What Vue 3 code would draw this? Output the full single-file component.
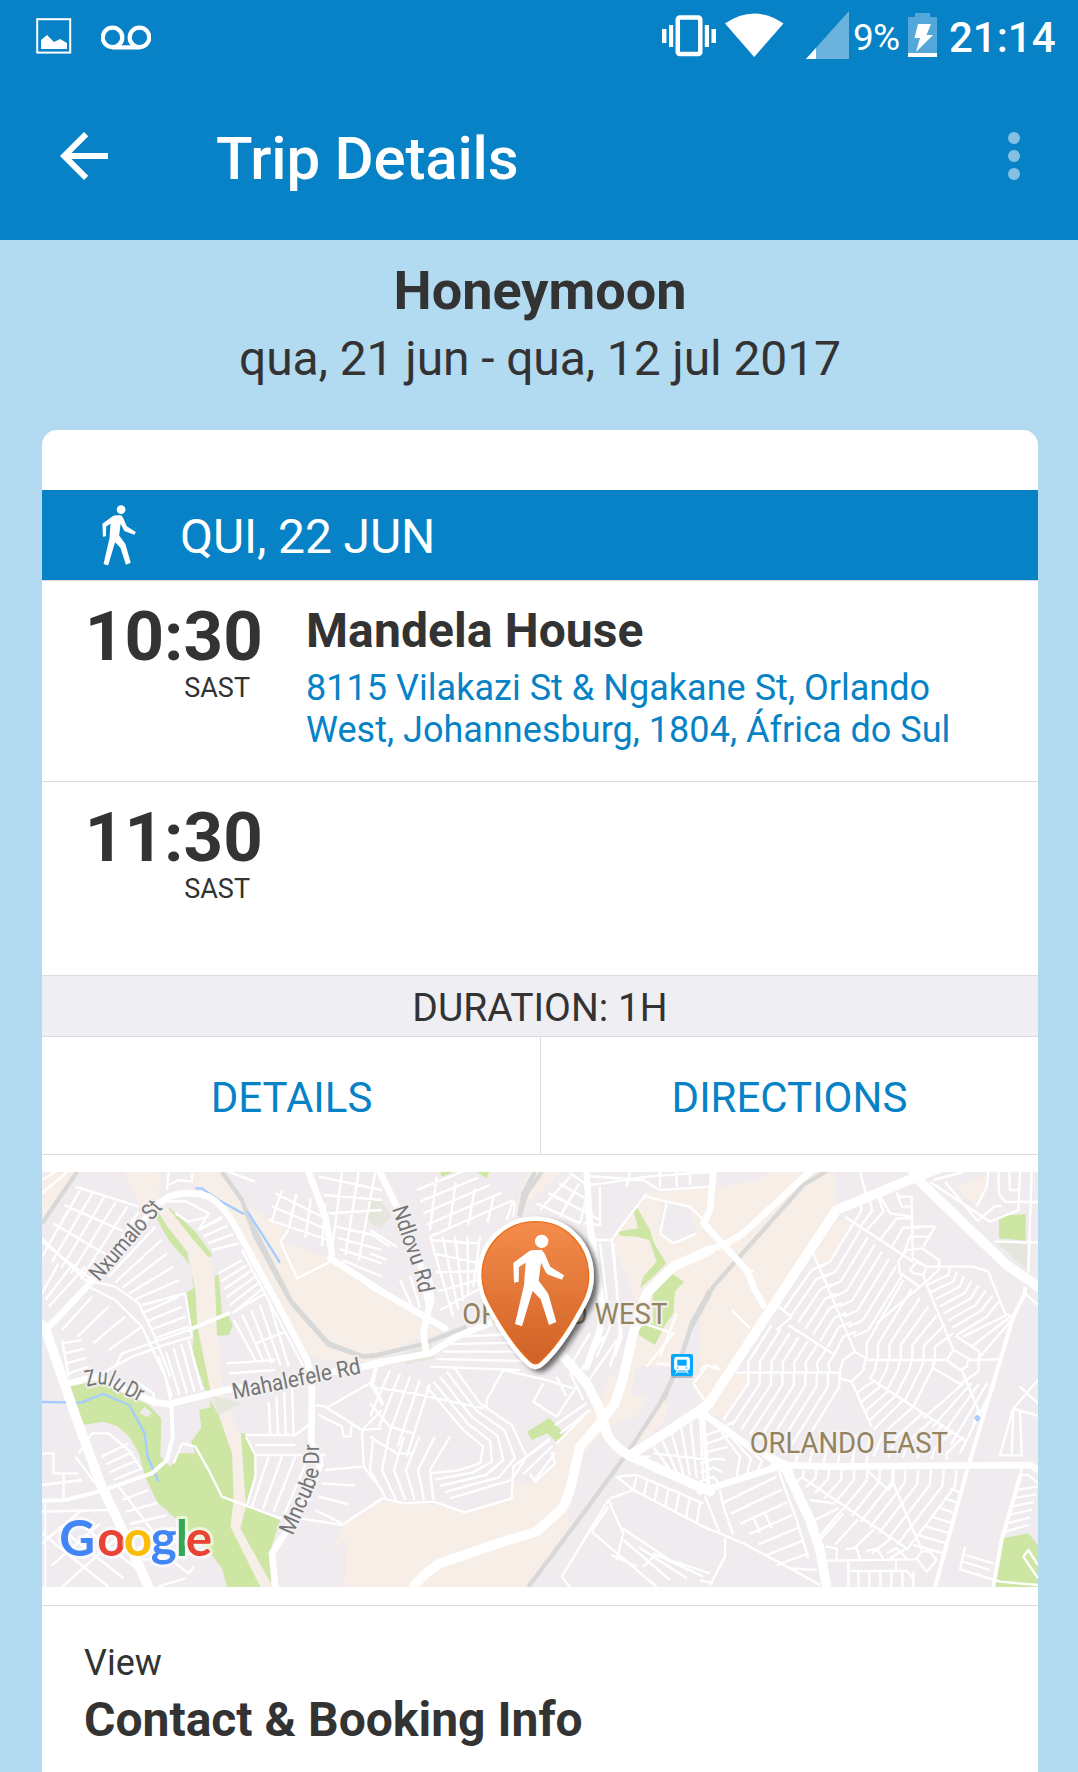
<script setup>
const stops = [
  { time: '10:30', zone: 'SAST', name: 'Mandela House', address: ['8115 Vilakazi St & Ngakane St, Orlando', 'West, Johannesburg, 1804, África do Sul'] },
  { time: '11:30', zone: 'SAST', name: '', address: [] },
]

const walker = 'M430 279L478 243Q488 239 500 240L515 240Q522 246 527 258L541 290L582 316L576 329L532 313Q527 308 524 300L513 278L506 332Q522 352 535 372L559 456L537 465L512 388L488 363L483 378L456 469L435 462L462 345L467 278L447 291L446 335L432 338Z'

// Spreads n streets evenly between two bounding polylines given as flat x,y lists.
function blend([a, b, n]) {
  let d = ''
  for (let i = 0; i < n; i++) {
    const t = n > 1 ? i / (n - 1) : 0
    for (let k = 0; k < a.length; k += 2) {
      const x = a[k] + (b[k] - a[k]) * t
      const y = a[k + 1] + (b[k + 1] - a[k + 1]) * t
      d += (k ? 'L' : 'M') + x.toFixed(1) + ' ' + y.toFixed(1)
    }
  }
  return d
}

const sheets = [
  {
    x: 0,
    tan: 'M245 6H352L350 80L385 125L450 190L508 262L520 330L528 500L545 690L595 790L612 1010L595 1075L690 1251H655L565 1070L575 990L570 850L530 735L490 600L465 440L460 360L440 250L340 120L290 100ZM455 6H540L600 95L740 185L720 215L870 270L1020 370V580L850 570L790 550L560 130L490 70L455 45ZM0 40L30 6H105L0 170ZM1020 990L905 1065L870 1140L915 1110L908 1251H1020Z',
    green: 'M335 130L345 120L380 175L435 245L460 360L466 470L505 660L490 662L450 545L455 500L430 370L455 355L445 285L380 210ZM372 105L400 130L460 185L511 255L500 262L450 205ZM518 318L530 314L540 430L558 435L573 465L560 495L525 497ZM505 690L530 735L570 850L575 990L565 1070L655 1251H555L540 1195L505 1150L400 1045L345 995L310 920L290 850L262 800L225 768L185 755L120 765L80 650L160 632L320 705L358 745L355 860L385 890L410 850H460L447 815L478 775L472 720L505 712ZM597 790H612L640 850V920L612 1010L715 1050L685 1140L687 1240L595 1075L612 1010Z',
    khaki: 'M510 678L600 700L530 735ZM980 88H1020V175L970 145Z',
    patch: 'M292 728L308 710L330 728L315 742Z',
    water: 'M0 696L118 698L183 672L262 705L308 790L317 860L350 935M460 55H480L530 90L605 132M617 125L714 278',
    rail: 'M105 6L0 160M540 6L600 90L640 200L740 385L860 520L965 560L1020 553M610 125L750 400L860 525L965 560',
    minor: 'M130 345L220 390L300 470L370 620L385 690M0 205L130 330L220 350L290 400L330 480L385 620M220 590L240 550L440 480L560 430M60 510L80 620M180 610L270 560L380 520M370 95L430 93L500 130L470 180L540 145M400 130L440 155L500 140M600 240L790 600M570 430L670 370M640 520L730 485M740 180L715 215L765 325L875 270M560 6L640 35M380 6L375 60M380 45L410 30L450 35V10M610 795H760L800 765M640 825H760M820 705L850 710L960 780L1020 775M830 735L900 770L905 800H925L930 760M960 780L965 890L1020 960M640 855H850M715 1045L740 1040L900 1065L1020 985M540 980L715 1045M420 820L460 830L500 900L540 980L620 1010M612 800L640 855V920L615 1005M110 850L150 790L200 790L260 840L300 900M0 850H35V910H110M65 910V990M0 945L120 930M100 860L160 940M0 1025L200 1020M10 1000V1251M230 950L330 1080L400 1180L440 1210L455 1190M345 1251L430 1225M395 880L420 820M430 370L450 500M290 640L335 670V710',
    streets: [
      [[0, 260, 120, 50], [145, 345, 290, 125], 6], [[100, 50, 290, 110], [0, 215, 150, 330], 4],
      [[200, 320, 340, 170], [300, 405, 430, 370], 6], [[300, 430, 410, 380], [350, 530, 450, 500], 5],
      [[150, 380, 60, 480], [300, 470, 200, 540], 4], [[350, 560, 390, 680], [440, 510, 480, 660], 5],
      [[60, 520, 120, 510], [80, 610, 140, 590], 4], [[0, 30, 40, 6], [0, 70, 75, 6], 2], [[0, 370, 50, 280], [20, 410, 130, 290], 3],
      [[470, 180, 540, 140], [510, 240, 590, 220], 4], [[530, 310, 600, 270], [570, 430, 670, 350], 6],
      [[575, 450, 640, 570], [680, 390, 740, 590], 5], [[555, 580, 700, 570], [560, 610, 700, 600], 2],
      [[700, 70, 860, 150], [680, 150, 860, 210], 3], [[720, 60, 690, 150], [850, 100, 840, 230], 4],
      [[880, 170, 1020, 200], [900, 270, 1020, 320], 4], [[830, 20, 1020, 60], [860, 130, 1020, 120], 3], [[900, 6, 870, 240], [1000, 6, 950, 270], 3],
      [[680, 695, 685, 795], [750, 650, 755, 800], 4], [[680, 860, 630, 1010], [840, 860, 760, 1040], 5],
      [[850, 900, 960, 890], [820, 1020, 900, 1060], 4], [[180, 860, 260, 820], [215, 930, 300, 895], 4],
      [[0, 1090, 200, 1251], [100, 1050, 290, 1200], 3], [[0, 1120, 120, 1020], [60, 1251, 230, 1100], 3],
      [[240, 990, 320, 960], [300, 1170, 450, 1150], 6], [[860, 710, 1000, 630], [960, 780, 1020, 720], 2],
    ],
    medium: 'M388 700L392 800L375 870L330 910L170 965L70 990L0 992M440 480L560 430M1020 700L990 640L1000 600',
    major: 'M15 475L60 430L130 355L350 100L385 78Q440 60 500 80Q545 105 580 170L700 390L795 570L810 620L808 820L835 880L800 980L735 1080L690 1150L700 1251M80 640L160 620L335 695L380 703L540 662L800 618L1020 580M800 6L850 140L870 250M865 265L1020 365',
    trunk: 'M0 465L15 490L105 750L175 940L260 1120L320 1251',
  },
  {
    x: 328,
    tan: 'M0 1015L60 990L200 1005L285 1027L420 985L430 935L490 938L555 880L560 820L635 730L690 700L720 610L765 640L780 480L800 400L725 210L745 180L800 110L830 70L1020 50V360L965 480L900 590H795L785 675L830 680L800 740L750 750L700 790L640 850L590 1060L640 1030L465 1251H0ZM0 350L200 480L290 460L0 560ZM470 6H570L450 130H430ZM870 690L895 700L880 760L800 830L780 820ZM970 640L1010 580L1020 590V690L990 700Z',
    green: 'M800 110L840 180L850 215L888 280L855 315L810 355L820 320L860 275L838 210L800 200L750 197L745 185L805 175L790 120ZM905 310L942 335L915 365L910 430L885 465L855 525L798 490L820 465L850 460L848 370ZM472 785L538 743L582 790L560 817L532 790L485 810ZM210 6H250L215 20ZM320 6H358L350 25Z',
    khaki: 'M0 90L35 92L65 140L30 175L0 160ZM98 550L185 525L195 565L110 583Z',
    patch: 'M875 95L920 100L960 120L985 190L915 225L865 190ZM730 600L765 590L760 640L730 620Z',
    water: '',
    rail: 'M0 560L150 525L290 470M515 6L470 70L448 140M495 6L460 70L448 140M1020 370L960 480L920 600L870 700L775 845L640 1030L475 1251M1020 360L965 460L935 560L880 690',
    minor: 'M660 45L700 40L830 20L1020 6M650 18L820 30L870 60L1020 50M830 70L800 110L750 175L725 210L755 500L735 560M830 80L890 95L960 110L1020 170M890 100L870 190L910 220L980 190M665 210H725M540 70L690 150M690 50V165L640 160M180 210L330 220M435 95L430 140M0 650L130 670L340 715M0 1010L40 985L100 1000L190 995L285 1027L425 985L430 890L540 810M480 910L495 935L555 880L545 845M350 720V690L400 600L530 630L610 655M490 695L560 740L620 650M490 695L520 640M785 860H840M740 920L790 960L1020 1080M740 920L800 915L1000 1000M720 985L790 960M575 1220L715 990L760 1090L740 1170M665 1085L860 1251M715 1010L665 1085M750 1070L900 1170L1020 1210M725 1155L800 1190M575 1220L600 1251M820 1190L860 1150M850 850L1020 870M820 460L910 490L830 590M860 580L900 585M970 640L1010 590M970 640L1010 700M640 740L560 820M780 6L770 50M870 6V50M920 6V50M960 15V45M920 430L870 560',
    streets: [
      [[140, 60, 290, 0], [180, 200, 430, 90], 5], [[200, 20, 180, 180], [430, 90, 410, 150], 5],
      [[180, 200, 250, 440], [330, 200, 310, 350], 5], [[190, 250, 330, 280], [210, 420, 340, 350], 4],
      [[0, 190, 60, 230], [50, 6, 110, 6], 1], [[0, 180, 80, 230], [0, 250, 50, 270], 2], [[90, 330, 130, 420], [180, 290, 190, 400], 4],
      [[500, 100, 630, 160], [600, 10, 660, 50], 4], [[510, 120, 600, 20], [630, 160, 655, 60], 3],
      [[260, 500, 480, 490], [180, 590, 450, 600], 5], [[620, 480, 570, 570], [740, 510, 650, 640], 4], [[690, 220, 720, 470, 680, 560], [730, 220, 750, 490, 720, 590], 2],
      [[250, 590, 330, 700, 425, 765, 470, 860, 425, 930, 240, 985], [170, 650, 280, 780, 340, 830, 330, 880, 270, 900, 180, 910], 5],
      [[60, 600, 0, 740], [180, 640, 110, 860], 5], [[10, 800, 0, 900, 50, 990], [240, 800, 180, 900, 190, 990], 6],
      [[0, 700, 60, 770, 130, 790], [0, 800, 80, 850, 130, 850], 2],
      [[430, 890, 540, 805], [490, 935, 555, 850], 3], [[555, 765, 650, 700], [570, 790, 660, 720], 2], [[560, 620, 590, 680], [600, 610, 640, 690], 2],
      [[800, 920, 790, 960], [990, 1000, 980, 1060], 7], [[850, 830, 900, 900], [990, 740, 1000, 930], 6],
      [[760, 1110, 900, 1230], [850, 1150, 1000, 1220], 3],
    ],
    medium: 'M1000 750L1015 940',
    major: 'M30 6L80 110L150 280L180 400L160 490L167 540M0 345L225 475M0 583L180 550L260 500L370 455L420 450M650 6L660 170L672 240L695 400L690 480L650 590',
    trunk: 'M580 560L650 640L690 720L710 790Q730 830 775 855L1020 965M1020 240L910 290L830 370L790 490L760 620L735 700L690 760L630 830L600 960Q580 1020 560 1030L500 1085L400 1115L210 1180Q160 1210 130 1251M780 855L900 780L1020 700',
  },
  {
    x: 658,
    tan: 'M0 60L180 30L200 6H405L410 110L330 240L200 410L0 730ZM420 145L455 160L385 275L350 290L340 250ZM100 612H145V640L70 750L25 725ZM765 50L860 15L858 55L828 110Z',
    green: 'M897 137L977 133V212L897 205ZM908 1105L985 1090L1014 1125V1251H880Z',
    khaki: 'M890 218L980 222V300Z',
    patch: '',
    water: 'M832 738L838 745L832 751L826 744Z',
    rail: 'M385 0L310 45L110 270L40 350L10 400L0 430',
    minor: 'M340 250L465 545M435 140L640 275M670 320L760 540M785 600L835 720L815 780M108 608H418M500 570H735M805 570L895 568M235 410L275 440L230 480M265 465L405 555M510 625L800 815M455 635L515 770M420 600L430 570L465 545L497 565L490 600L455 635L420 625ZM740 570L760 540L805 565L800 590L780 600ZM700 570V595L780 642L835 605L838 545L768 498M595 275L620 240L665 235L718 270L715 300L690 325L660 350L600 310ZM630 300L650 275L680 290L670 315L640 310ZM590 80H635L638 265L680 290H820L865 305L915 430L935 440M975 370L1014 405M480 6L500 80M1014 630L940 715L900 855L965 857L960 725M940 715L1014 738M965 890L960 930M795 1130L780 1198L900 1235L1014 1245M795 1155L880 1180M790 1175L870 1200M1014 1225L970 1160L985 1140L1014 1185M690 35L870 155L955 120L960 6M700 30L790 6M735 35L830 150M865 6L860 50L830 110M895 6L897 70L915 95L1014 96M928 6L930 60H955M995 6L985 310M830 155L885 108H905M885 215L1014 218M15 980L60 1090M60 960L70 1010L100 1095M0 1065L130 1120L270 1195L350 1200M235 900L290 1050L325 1165M75 1105V1160L30 1245M380 1172L650 1168M445 1251V1172M445 1203H620L640 1225M650 1165L665 1145H690L710 1170L680 1205ZM580 900V940L665 1140M500 900L565 960L580 940M310 925L620 1135M588 1172V1203M940 720L935 850M965 915H985L1014 940M97 422L150 475M145 305L162 302M0 600L20 585L60 600L45 585M0 1230L40 1240M270 1195L360 1245M160 1040L180 1090M195 1030L215 1075',
    streets: [
      [[145, 608, 145, 640, 70, 750], [418, 608, 418, 650, 285, 865], 9], [[145, 608, 145, 575, 215, 465], [390, 608, 385, 580, 405, 550], 8],
      [[250, 420, 335, 300, 365, 285], [405, 550, 430, 500, 470, 485], 8], [[360, 290, 390, 275, 460, 160], [460, 500, 505, 480, 610, 310], 8],
      [[465, 155, 485, 120, 480, 90], [500, 180, 550, 125, 535, 80], 3], [[540, 210, 590, 145, 635, 145], [610, 255, 630, 200, 690, 200], 3],
      [[540, 80, 570, 130, 635, 140], [590, 65, 605, 110, 635, 110], 2], [[640, 170, 705, 170, 670, 230], [640, 170, 705, 170, 670, 230], 1],
      [[500, 570, 500, 520, 610, 330], [705, 570, 705, 530, 760, 490], 7], [[530, 460, 660, 350], [690, 520, 750, 480], 1],
      [[680, 345, 745, 315, 750, 290], [770, 495, 860, 440, 900, 390], 8], [[790, 500, 920, 435], [840, 560, 935, 450], 3],
      [[530, 570, 525, 600, 510, 625], [705, 575, 695, 600, 640, 710], 6], [[470, 670, 495, 650, 520, 635], [520, 780, 550, 750, 610, 690], 5],
      [[520, 860, 550, 790, 640, 710], [740, 870, 740, 850, 790, 800], 6], [[670, 745, 790, 640], [780, 850, 885, 640], 5], [[285, 880, 300, 840], [500, 880, 510, 780], 6],
      [[310, 900, 310, 920, 290, 935], [770, 900, 765, 950, 620, 1140], 13], [[425, 1020, 350, 1110], [620, 1135, 570, 1165], 5], [[330, 990, 400, 1000], [360, 1110, 430, 1030], 3],
      [[750, 955, 785, 970], [640, 1125, 730, 1150], 7], [[65, 1000, 230, 920], [230, 1185, 325, 1150], 7],
      [[475, 1205, 475, 1251], [640, 1205, 640, 1251], 6], [[945, 960, 1014, 950], [915, 1085, 985, 1065], 6], [[960, 650, 1014, 700], [940, 690, 1014, 720], 1],
      [[0, 800, 50, 785, 100, 755], [0, 935, 40, 920, 60, 945], 6], [[60, 780, 120, 860, 110, 920], [130, 810, 220, 880, 200, 900], 4],
      [[375, 1130, 410, 1135, 410, 1170], [560, 1150, 590, 1135, 620, 1165], 4],
    ],
    medium: 'M975 355V370L940 440L800 905L705 1251M960 920L905 1110L880 1251',
    major: 'M0 250L80 220L130 190L335 0M40 6L30 120L10 160L70 225L140 300L165 360L190 405M0 725L150 830L260 885M0 965L30 955L250 885L380 890L990 885L1014 900M230 890L270 905',
    trunk: 'M0 735L40 680L330 240L410 120L640 25L730 -10M640 15L920 285L1014 350M260 900L330 1050L360 1140L380 1251M0 950L25 960',
  },
].map((s) => ({ ...s, fine: s.minor + s.streets.map(blend).join(''), move: `translate(${s.x} -2) scale(.33333)` }))
</script>

<template>
  <div class="screen">
    <header class="top">
      <div class="status">
        <svg class="ic-image" width="36" height="36" viewBox="0 0 36 36">
          <rect x="1.2" y="1.2" width="33" height="33.4" fill="none" stroke="#fff" stroke-width="2" />
          <path d="M5 22L11 17L18 24L24 21L31 25V31H5Z" fill="#fff" />
        </svg>
        <svg class="ic-voice" width="50" height="25" viewBox="0 0 50 25">
          <g fill="none" stroke="#fff" stroke-width="4.2"><circle cx="11.5" cy="12.4" r="9.8" /><circle cx="38.5" cy="12.4" r="9.8" /><path d="M11.5 22.4H38.5" /></g>
        </svg>
        <svg class="ic-vibe" width="54" height="42" viewBox="0 0 54 42" fill="#fff">
          <rect x="15.8" y="2.5" width="22.5" height="36.5" rx="2" fill="none" stroke="#fff" stroke-width="4.5" />
          <path d="M0 14H4.5V28H0ZM7 10H11.2V32H7ZM42.8 10H47V32H42.8ZM49.5 14H54V28H49.5Z" />
        </svg>
        <svg class="ic-wifi" width="59" height="44" viewBox="0 0 59 44"><path d="M0 10.5Q29 -9.500 58.500 10.500L29.200 44Z" fill="#fff" /></svg>
        <svg class="ic-signal" width="43" height="48" viewBox="0 0 43 48"><path d="M43 0V48H0Z" fill="#6bb3dc" /><path d="M0 48L10 37V48Z" fill="#fff" /></svg>
        <span class="pct">9%</span>
        <svg class="ic-batt" width="29" height="44" viewBox="0 0 29 44">
          <path d="M7 0H22V4H29V40H0V4H7Z" fill="#53a8d9" /><path d="M0 40H29V44H0ZM10 11H23L18.500 22H25L8 39L12 25H6.500Z" fill="#fff" />
        </svg>
        <span class="clock">21:14</span>
      </div>
      <div class="appbar">
        <svg class="back" width="72" height="72" viewBox="0 0 24 24" fill="#fff"><path d="M20 11H7.830l5.590-5.590L12 4l-8 8 8 8 1.410-1.410L7.830 13H20v-2z" /></svg>
        <h1>Trip Details</h1>
        <div class="more"><i /><i /><i /></div>
      </div>
    </header>

    <section class="summary">
      <h2>Honeymoon</h2>
      <p>qua, 21 jun - qua, 12 jul 2017</p>
    </section>

    <main class="card">
      <div class="day">
        <svg width="34" height="61" viewBox="428 193 155 278" fill="#fff"><circle cx="515" cy="214" r="20" /><path :d="walker" /></svg>
        <span>QUI, 22 JUN</span>
      </div>
      <div v-for="s in stops" :key="s.time" class="stop">
        <div class="when"><b>{{ s.time }}</b><span>{{ s.zone }}</span></div>
        <div class="where">
          <h3>{{ s.name }}</h3>
          <p v-for="line in s.address" :key="line">{{ line }}</p>
        </div>
      </div>
      <div class="duration">DURATION: 1H</div>
      <div class="actions"><a>DETAILS</a><a>DIRECTIONS</a></div>

      <svg class="map" width="996" height="415" viewBox="0 0 996 415">
        <defs>
          <linearGradient id="pin" x1="0" y1="0" x2="0" y2="1"><stop offset="0" stop-color="#f58c4b" /><stop offset="1" stop-color="#cf6226" /></linearGradient>
          <filter id="shade" x="-20%" y="-20%" width="150%" height="150%"><feDropShadow dx="14" dy="10" stdDeviation="8" flood-color="#000" flood-opacity=".55" /></filter>
          <path id="zulu" d="M134 650L165 643Q195 640 220 660L300 700" />
          <path id="mncube" d="M752 1098L802 985Q832 925 832 880V800" />
          <path id="ndlovu" d="M66 116L106 235Q134 295 150 385" />
        </defs>
        <rect width="996" height="415" fill="#efebef" />
        <g v-for="s in sheets" :key="'a' + s.x" :transform="s.move">
          <path :d="s.tan" fill="#f6eee7" /><path :d="s.green" fill="#cde6a3" /><path :d="s.khaki" fill="#e5e6dc" /><path :d="s.patch" fill="#efebef" />
        </g>
        <g v-for="s in sheets" :key="'b' + s.x" :transform="s.move" fill="none" stroke-linejoin="round">
          <path :d="s.rail" stroke="#d7d8d7" stroke-width="13" /><path :d="s.fine" stroke="#fff" stroke-width="7" />
          <path :d="s.water" stroke="#a3ccff" stroke-width="7" />
        </g>
        <g v-for="s in sheets" :key="'c' + s.x" :transform="s.move" fill="none" stroke="#fff" stroke-linejoin="round" stroke-linecap="round">
          <path :d="s.medium" stroke-width="12" /><path :d="s.major" stroke-width="20" /><path :d="s.trunk" stroke-width="29" />
        </g>

        <g transform="translate(0 -2) scale(.33333)" class="road">
          <text transform="translate(172 337) rotate(-49.400)" textLength="294" lengthAdjust="spacingAndGlyphs">Nxumalo St</text>
          <text transform="translate(575 688) rotate(-11.500)" textLength="392" lengthAdjust="spacingAndGlyphs">Mahalefele Rd</text>
          <text textLength="172" lengthAdjust="spacingAndGlyphs"><textPath href="#zulu" textLength="172" lengthAdjust="spacingAndGlyphs">Zulu Dr</textPath></text>
          <text textLength="290" lengthAdjust="spacingAndGlyphs"><textPath href="#mncube" textLength="290" lengthAdjust="spacingAndGlyphs">Mncube Dr</textPath></text>
          <text class="google" y="1157"><tspan x="52" fill="#4285f4">G</tspan><tspan x="166" fill="#ea4335">o</tspan><tspan x="245" fill="#fbbc05">o</tspan><tspan x="326" fill="#4285f4">g</tspan><tspan x="401" fill="#34a853">l</tspan><tspan x="431" fill="#ea4335">e</tspan></text>
        </g>
        <g transform="translate(328 -2) scale(.33333)">
          <g class="road"><text textLength="268" lengthAdjust="spacingAndGlyphs"><textPath href="#ndlovu" textLength="268" lengthAdjust="spacingAndGlyphs">Ndlovu Rd</textPath></text></g>
          <text class="area" x="277" y="462" textLength="615" lengthAdjust="spacingAndGlyphs">ORLANDO WEST</text>
          <g>
            <rect x="903" y="556" width="66" height="68" rx="6" fill="#8a99a5" opacity=".6" />
            <rect x="903" y="552" width="66" height="66" rx="6" fill="#03a9fc" />
            <path d="M920 562H952Q958 562 958 568V596Q958 600 954 600H918Q914 600 914 596V568Q914 562 920 562ZM924 600L917 611M948 600L955 611M920 606H952" fill="#fff" stroke="#fff" stroke-width="3" />
            <path d="M922 569H950V587H922Z" fill="#03a9fc" /><circle cx="923" cy="594" r="2.500" fill="#03a9fc" /><circle cx="949" cy="594" r="2.500" fill="#03a9fc" />
          </g>
          <path filter="url(#shade)" d="M496 153C590 153 658 228 658 318C658 362 642 390 625 420C590 485 550 543 510 578Q496 590 482 578C442 543 402 482 367 420C346 385 334 355 334 318C334 225 405 153 496 153Z" fill="#fff" stroke="#fff" stroke-width="27" />
          <path d="M496 155C589 155 656 229 656 318C656 362 640 390 623 420C588 485 548 541 509 576Q496 587 483 576C444 541 404 482 369 420C348 385 336 355 336 318C336 226 406 155 496 155Z" fill="url(#pin)" stroke="#e96d14" stroke-width="4" />
          <g fill="#fff"><circle cx="515" cy="214" r="20" /><path :d="walker" /></g>
        </g>
        <g transform="translate(658 -2) scale(.33333)"><text class="area" x="149" y="849" textLength="595" lengthAdjust="spacingAndGlyphs">ORLANDO EAST</text></g>
      </svg>

      <div class="contact"><span>View</span><b>Contact &amp; Booking Info</b></div>
    </main>
  </div>
</template>

<style>
body { margin: 0; background: #b2daf1; }
</style>

<style scoped>
.screen { width: 1078px; height: 1772px; overflow: hidden; background: #b2daf1; color: #333; font-family: Roboto, "Liberation Sans", sans-serif; }
h1, h2, h3, p { margin: 0; }
svg { display: block; flex: none; }
.top { height: 240px; background: #0782c6; color: #fff; }
.status { display: flex; align-items: flex-start; height: 76px; white-space: nowrap; }
.ic-image { margin: 18px 0 0 36px; }
.ic-voice { margin: 25px 0 0 29px; }
.ic-vibe { margin: 15px 0 0 511px; }
.ic-wifi { margin: 13px 0 0 9px; }
.ic-signal { margin: 11px 0 0 22px; }
.pct { width: 55px; margin: 17px 0 0 4px; font-size: 37px; line-height: 41px; letter-spacing: -.9px; }
.ic-batt { margin: 13px 0 0 0; }
.clock { margin: 15px 0 0 12px; font-size: 42px; line-height: 46px; font-weight: 500; }
.appbar { display: flex; align-items: flex-start; }
.back { margin: 44px 0 0 48px; }
h1 { flex: 1; margin: 48px 0 0 96px; font-size: 60px; line-height: 70px; font-weight: 500; letter-spacing: -.2px; }
.more { display: flex; flex-direction: column; gap: 6px; margin: 56px 58px 0 0; }
.more i { width: 12px; height: 12px; border-radius: 50%; background: #83c0e3; }
.summary { height: 190px; padding: 19px 0 0 2px; box-sizing: border-box; text-align: center; }
h2 { font-size: 54px; line-height: 64px; font-weight: 700; }
.summary p { margin-top: 6px; font-size: 48px; line-height: 60px; letter-spacing: -.11px; }
.card { box-sizing: border-box; height: 1342px; margin: 0 40px 0 42px; padding-top: 60px; border-radius: 15px 15px 0 0; background: #fff; }
.day { display: flex; align-items: center; height: 90px; padding-left: 60px; border-bottom: 1px solid #dcdcdc; background: #0782c6; background-clip: padding-box; color: #fff; font-size: 48px; letter-spacing: -.1px; }
.day span { margin: 3px 0 0 44px; }
.stop { display: flex; height: 200px; border-bottom: 1px solid #dcdcdc; }
.stop + .stop { height: 193px; }
.when { display: flex; flex-direction: column; align-items: flex-end; width: 222px; padding-top: 21px; }
.when b { margin-right: 1px; font-size: 69px; line-height: 70px; letter-spacing: .1px; }
.when span { margin: 1px 14px 0 0; font-size: 27px; line-height: 30px; }
.where { padding: 22px 0 0 42px; white-space: nowrap; }
.where h3 { height: 64px; font-size: 48px; line-height: 56px; letter-spacing: .1px; }
.where p { color: #0782c6; font-size: 36px; line-height: 42px; letter-spacing: .03px; }
.duration { height: 60px; border-bottom: 1px solid #dcdcdc; background: #efeef3; text-align: center; font-size: 39px; line-height: 64px; }
.actions { display: flex; height: 117px; border-bottom: 1px solid #dcdcdc; color: #0782c6; text-align: center; font-size: 42px; line-height: 121px; }
.actions a { flex: 1; padding-left: 1px; }
.actions a + a { border-left: 1px solid #dcdcdc; padding-left: 0; }
.map { margin: 17px 0 18px; }
.road text { font: 68px Roboto, sans-serif; fill: #757575; stroke: #f3f0f2; stroke-width: 12px; stroke-opacity: .9; stroke-linejoin: round; paint-order: stroke; }
.area { font: 89px Roboto, sans-serif; fill: #94835f; stroke: #f5f2f4; stroke-width: 14px; stroke-opacity: .8; stroke-linejoin: round; paint-order: stroke; }
.road .google { font: 700 148px Lato, sans-serif; fill: inherit; stroke: #fff; stroke-width: 18px; stroke-opacity: .6; }
.contact { display: flex; flex-direction: column; padding: 35px 0 0 42px; border-top: 1px solid #dcdcdc; }
.contact span { font-size: 36px; line-height: 44px; }
.contact b { margin-top: 7px; font-size: 48px; line-height: 56px; }
</style>
